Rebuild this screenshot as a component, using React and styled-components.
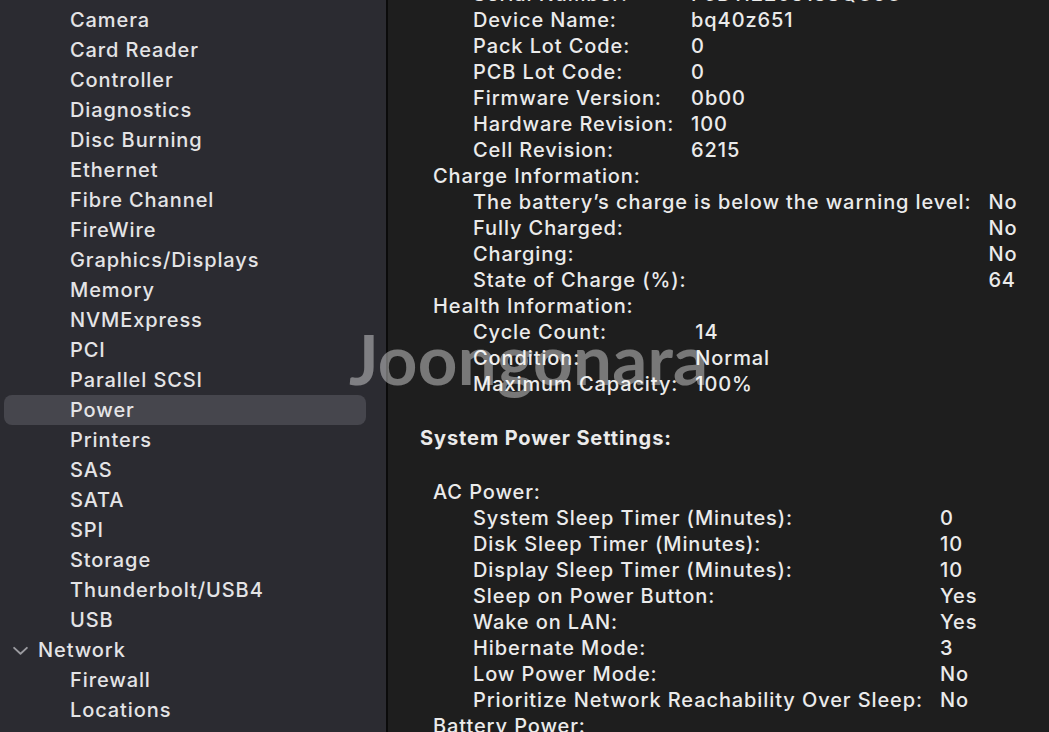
import styled, { createGlobalStyle } from 'styled-components';

const GlobalStyle = createGlobalStyle`
    html, body {
        margin: 0;
        padding: 0;
        height: 100%;
        overflow: hidden;
        background: #1e1e1e;
    }
    * {
        box-sizing: border-box;
    }
`;

const Janela = styled.div`
    display: flex;
    width: 100vw;
    height: 100vh;
    overflow: hidden;
    font-family: Inter, "Noto Sans", sans-serif;
    font-size: 20px;
    font-weight: 500;
    letter-spacing: 0.9px;
    -webkit-font-smoothing: antialiased;
    position: relative;
`;

const BarraLateral = styled.nav`
    width: 388px;
    flex-shrink: 0;
    background: #2b2b31;
    border-right: 2px solid #0b0b0b;
    padding: 5px 20px 0 4px;
`;

const ItemLateral = styled.div`
    height: 30px;
    display: flex;
    align-items: center;
    gap: 9px;
    padding-left: ${props => (props.$grupo ? '8px' : '66px')};
    color: #e4e4e6;
    border-radius: 8px;
    background: ${props => (props.$ativo ? '#46464d' : 'transparent')};
    white-space: nowrap;
`;

const Chevron = styled.svg`
    width: 17px;
    height: 17px;
    flex-shrink: 0;
`;

const Conteudo = styled.main`
    flex: 1;
    padding: 0 0 0 32px;
    margin-top: -19px;
    color: #ebebeb;
`;

const Linha = styled.div`
    height: 26px;
    display: flex;
    align-items: center;
    padding-left: ${props => props.$nivel * 40 + 13}px;
    white-space: nowrap;
`;

const TituloSecao = styled.div`
    height: 26px;
    display: flex;
    align-items: center;
    font-weight: 700;
    margin: 28px 0;
    white-space: nowrap;
`;

const Tabela = styled.div`
    display: grid;
    grid-template-columns: max-content 1fr;
    column-gap: 17px;
    padding-left: 53px;
`;

const Celula = styled.div`
    height: 26px;
    display: flex;
    align-items: center;
    white-space: nowrap;
`;

const MarcaDagua = styled.div`
    position: absolute;
    left: 349px;
    top: 317px;
    font-family: Lato, "Noto Sans", sans-serif;
    font-size: 69px;
    font-weight: 700;
    letter-spacing: 0.3px;
    color: rgba(255, 255, 255, 0.4);
    pointer-events: none;
`;

const itensHardware = [
    'Camera', 'Card Reader', 'Controller', 'Diagnostics', 'Disc Burning', 'Ethernet',
    'Fibre Channel', 'FireWire', 'Graphics/Displays', 'Memory', 'NVMExpress', 'PCI',
    'Parallel SCSI', 'Power', 'Printers', 'SAS', 'SATA', 'SPI', 'Storage',
    'Thunderbolt/USB4', 'USB',
];

const itensRede = ['Firewall', 'Locations', 'Volumes'];

const bateria = [
    ['Serial Number:', 'F5D11220313SQC6C'],
    ['Device Name:', 'bq40z651'],
    ['Pack Lot Code:', '0'],
    ['PCB Lot Code:', '0'],
    ['Firmware Version:', '0b00'],
    ['Hardware Revision:', '100'],
    ['Cell Revision:', '6215'],
];

const carga = [
    ['The battery’s charge is below the warning level:', 'No'],
    ['Fully Charged:', 'No'],
    ['Charging:', 'No'],
    ['State of Charge (%):', '64'],
];

const saude = [
    ['Cycle Count:', '14'],
    ['Condition:', 'Normal'],
    ['Maximum Capacity:', '100%'],
];

const energiaAC = [
    ['System Sleep Timer (Minutes):', '0'],
    ['Disk Sleep Timer (Minutes):', '10'],
    ['Display Sleep Timer (Minutes):', '10'],
    ['Sleep on Power Button:', 'Yes'],
    ['Wake on LAN:', 'Yes'],
    ['Hibernate Mode:', '3'],
    ['Low Power Mode:', 'No'],
    ['Prioritize Network Reachability Over Sleep:', 'No'],
];

function TabelaDados({ linhas }) {
    return (
        <Tabela>
            {linhas.flatMap(([rotulo, valor]) => [
                <Celula key={rotulo}>{rotulo}</Celula>,
                <Celula key={rotulo + '-v'}>{valor}</Celula>,
            ])}
        </Tabela>
    );
}

export default function App() {
    return (
        <>
            <GlobalStyle />
            <Janela>
                <BarraLateral>
                    {itensHardware.map(item => (
                        <ItemLateral key={item} $ativo={item === 'Power'}>{item}</ItemLateral>
                    ))}
                    <ItemLateral $grupo>
                        <Chevron viewBox="0 0 16 16">
                            <path d="M2 5.5 L8 11 L14 5.5" fill="none" stroke="#9b9ba0" strokeWidth="1.8" strokeLinecap="round" strokeLinejoin="round" />
                        </Chevron>
                        Network
                    </ItemLateral>
                    {itensRede.map(item => (
                        <ItemLateral key={item}>{item}</ItemLateral>
                    ))}
                </BarraLateral>
                <Conteudo>
                    <TabelaDados linhas={bateria} />
                    <Linha $nivel={0}>Charge Information:</Linha>
                    <TabelaDados linhas={carga} />
                    <Linha $nivel={0}>Health Information:</Linha>
                    <TabelaDados linhas={saude} />
                    <TituloSecao>System Power Settings:</TituloSecao>
                    <Linha $nivel={0}>AC Power:</Linha>
                    <TabelaDados linhas={energiaAC} />
                    <Linha $nivel={0}>Battery Power:</Linha>
                </Conteudo>
                <MarcaDagua>Joongonara</MarcaDagua>
            </Janela>
        </>
    );
}
